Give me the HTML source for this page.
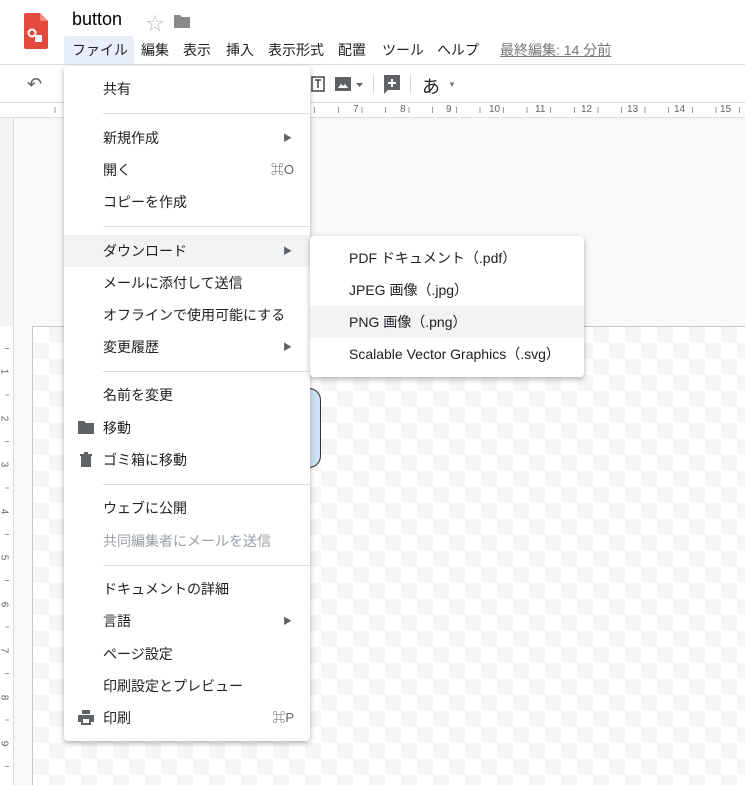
<!DOCTYPE html>
<html><head><meta charset="utf-8"><style>
*{box-sizing:border-box;margin:0;padding:0}
body{width:745px;height:785px;overflow:hidden;background:#fff;font-family:"Liberation Sans","Noto Sans CJK JP",sans-serif;color:#202124;position:relative}
.abs{position:absolute}
.title{left:72px;top:9px;font-size:18px;color:#000}
.mb{top:38px;font-size:14px;color:#202124;height:24px;line-height:24px}
.canvas{left:32px;top:326px;width:713px;height:459px;border-left:1px solid #c6c6c6;border-top:1px solid #c6c6c6;
background-color:#fff;background-image:linear-gradient(45deg,#f6f6f6 25%,transparent 25%,transparent 75%,#f6f6f6 75%),linear-gradient(45deg,#f6f6f6 25%,transparent 25%,transparent 75%,#f6f6f6 75%);background-size:32px 32px;background-position:0 0,16px 16px}
.menu{background:#fff;border-radius:4px;box-shadow:0 2px 6px rgba(0,0,0,.3);font-size:14px}
.it{position:absolute;left:0;right:0;height:32px;line-height:32px;padding-left:39px}
.hl{background:#f1f3f4}
.div{position:absolute;left:39px;right:0;height:1px;background:#dadce0}
.arr{position:absolute;right:18px;top:0;font-size:9px;color:#5f6368}
.sc{position:absolute;right:16px;top:0;font-size:13px;color:#5f6368}
.rn{font-size:10px;color:#5f6368;position:absolute;top:104px}
.vn{position:absolute;left:1px;font-size:10px;color:#5f6368;transform:rotate(90deg)}
</style></head><body>
<svg class="abs" style="left:24px;top:13px" width="24" height="36" viewBox="0 0 24 36"><path d="M2 0h14l8 8v26a2 2 0 0 1-2 2H2a2 2 0 0 1-2-2V2a2 2 0 0 1 2-2z" fill="#e24a3b"/><path d="M16 0l8 8h-6a2 2 0 0 1-2-2z" fill="#f28b82"/><circle cx="8" cy="20" r="3.5" fill="none" stroke="#fff" stroke-width="2"/><rect x="11" y="22" width="7" height="7" fill="#fff"/></svg>
<div class="abs title">button</div>
<div class="abs" style="left:146px;top:10px;font-size:18px;color:#bbb">☆</div>
<svg class="abs" style="left:174px;top:14px" width="16" height="14"><path d="M0 1h6l2 2h8v11H0z" fill="#8a8a8a"/></svg>
<div class="abs" style="left:64px;top:36px;width:70px;height:28px;background:#e8eef9;border-radius:3px 3px 0 0"></div>
<div class="abs mb" style="left:72px">ファイル</div>
<div class="abs mb" style="left:141px">編集</div>
<div class="abs mb" style="left:183px">表示</div>
<div class="abs mb" style="left:226px">挿入</div>
<div class="abs mb" style="left:268px">表示形式</div>
<div class="abs mb" style="left:338px">配置</div>
<div class="abs mb" style="left:382px">ツール</div>
<div class="abs mb" style="left:437px">ヘルプ</div>
<div class="abs mb" style="left:500px;color:#777;text-decoration:underline">最終編集: 14 分前</div>
<div class="abs" style="left:0;top:64px;width:745px;height:1px;background:#dadce0"></div>
<div class="abs" style="left:27px;top:74px;font-size:18px;color:#5f6368">↶</div>
<svg class="abs" style="left:310px;top:75px" width="16" height="18"><rect x="2" y="2" width="12" height="14" fill="none" stroke="#444" stroke-width="1.5"/><path d="M5 5h6M8 5v8" stroke="#444" stroke-width="1.5"/></svg>
<svg class="abs" style="left:335px;top:75px" width="30" height="18"><rect x="0" y="2" width="16" height="14" fill="#5f6368"/><path d="M3 13l3-4 2 2 2-2 3 4z" fill="#fff"/><path d="M21 8h7l-3.5 4z" fill="#5f6368"/></svg>
<div class="abs" style="left:373px;top:74px;width:1px;height:20px;background:#dadce0"></div>
<svg class="abs" style="left:384px;top:75px" width="18" height="20"><path d="M0 0h16v15H4l-4 4z" fill="#5f6368"/><path d="M8 4v8M4 8h8" stroke="#fff" stroke-width="2"/></svg>
<div class="abs" style="left:410px;top:74px;width:1px;height:20px;background:#dadce0"></div>
<div class="abs" style="left:422px;top:73px;font-size:18px;color:#202124">あ</div>
<div class="abs" style="left:448px;top:80px;font-size:8px;color:#777">▼</div>
<div class="abs" style="left:0;top:102px;width:745px;height:16px;background:#fff;border-top:1px solid #dadce0;border-bottom:1px solid #dadce0"></div>
<div class="abs" style="left:32px;top:107px;width:713px;height:6px;background:repeating-linear-gradient(90deg,transparent 0,transparent 22.6px,#999 22.6px,#999 23.6px)"></div>
<div class="rn" style="left:352px;background:#fff;padding:0 1px">7</div><div class="rn" style="left:399px;background:#fff;padding:0 1px">8</div><div class="rn" style="left:445px;background:#fff;padding:0 1px">9</div><div class="rn" style="left:488px;background:#fff;padding:0 1px">10</div><div class="rn" style="left:534px;background:#fff;padding:0 1px">11</div><div class="rn" style="left:580px;background:#fff;padding:0 1px">12</div><div class="rn" style="left:626px;background:#fff;padding:0 1px">13</div><div class="rn" style="left:673px;background:#fff;padding:0 1px">14</div><div class="rn" style="left:719px;background:#fff;padding:0 1px">15</div>
<div class="abs" style="left:0;top:118px;width:745px;height:208px;background:#f8f9fa"></div>
<div class="abs" style="left:0;top:118px;width:14px;height:667px;background:#f1f3f4;border-right:1px solid #dadce0"></div>
<div class="abs" style="left:14px;top:326px;width:18px;height:459px;background:#f8f9fa"></div>
<div class="abs canvas"></div>
<div class="abs" style="left:0;top:326px;width:14px;height:459px;background:#fff;border-right:1px solid #dadce0"></div>
<div class="abs" style="left:5px;top:326px;width:4px;height:459px;background:repeating-linear-gradient(180deg,transparent 0,transparent 22.2px,#999 22.2px,#999 23.2px)"></div>
<div class="vn" style="top:366px;background:#fff">1</div><div class="vn" style="top:413px;background:#fff">2</div><div class="vn" style="top:459px;background:#fff">3</div><div class="vn" style="top:506px;background:#fff">4</div><div class="vn" style="top:552px;background:#fff">5</div><div class="vn" style="top:599px;background:#fff">6</div><div class="vn" style="top:645px;background:#fff">7</div><div class="vn" style="top:692px;background:#fff">8</div><div class="vn" style="top:738px;background:#fff">9</div>
<div class="abs" style="left:250px;top:388px;width:71px;height:80px;background:#cfe2f3;border:1.5px solid #333;border-radius:12px"></div>
<div class="abs menu" style="left:64px;top:66px;width:246px;height:675px">
<div class="it" style="top:7px">共有</div>
<div class="div" style="top:47px"></div>
<div class="it" style="top:56px">新規作成<span class="arr">▶</span></div>
<div class="it" style="top:88px">開く<span class="sc">⌘O</span></div>
<div class="it" style="top:120px">コピーを作成</div>
<div class="div" style="top:160px"></div>
<div class="it hl" style="top:169px">ダウンロード<span class="arr">▶</span></div>
<div class="it" style="top:201px">メールに添付して送信</div>
<div class="it" style="top:233px">オフラインで使用可能にする</div>
<div class="it" style="top:265px">変更履歴<span class="arr">▶</span></div>
<div class="div" style="top:305px"></div>
<div class="it" style="top:313px">名前を変更</div>
<div class="it" style="top:346px">移動</div>
<svg class="abs" style="left:14px;top:355px" width="16" height="13"><path d="M0 0h6l2 2h8v11H0z" fill="#5f6368"/></svg>
<div class="it" style="top:378px">ゴミ箱に移動</div>
<svg class="abs" style="left:16px;top:386px" width="12" height="15"><path d="M0 2h12v2H0zM4 0h4v2H4zM1 4h10v11H1z" fill="#5f6368"/></svg>
<div class="div" style="top:418px"></div>
<div class="it" style="top:426px">ウェブに公開</div>
<div class="it" style="top:459px;color:#9aa0a6">共同編集者にメールを送信</div>
<div class="div" style="top:499px"></div>
<div class="it" style="top:507px">ドキュメントの詳細</div>
<div class="it" style="top:539px">言語<span class="arr">▶</span></div>
<div class="it" style="top:572px">ページ設定</div>
<div class="it" style="top:604px">印刷設定とプレビュー</div>
<div class="it" style="top:636px">印刷<span class="sc">⌘P</span></div>
<svg class="abs" style="left:14px;top:644px" width="16" height="15"><path d="M4 0h8v4H4zM0 5h16v7h-3v3H3v-3H0z" fill="#5f6368"/><rect x="5" y="9" width="6" height="4" fill="#fff"/></svg>
</div>
<div class="abs menu" style="left:310px;top:236px;width:274px;height:141px">
<div class="it" style="top:6px">PDF ドキュメント（.pdf）</div>
<div class="it" style="top:38px">JPEG 画像（.jpg）</div>
<div class="it hl" style="top:70px">PNG 画像（.png）</div>
<div class="it" style="top:102px">Scalable Vector Graphics（.svg）</div>
</div>
</body></html>
